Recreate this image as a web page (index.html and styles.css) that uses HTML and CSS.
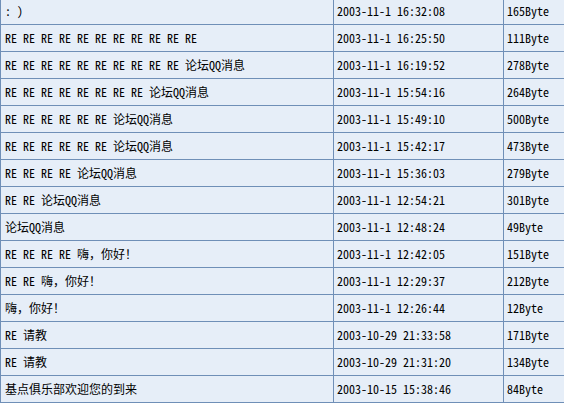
FILE: index.html
```html
<!DOCTYPE html>
<html lang="zh-CN">
<head>
<meta charset="utf-8">
<link rel="stylesheet" href="styles.css">
</head>
<body>
<div class="wrap">
<table class="list">
<colgroup><col class="c-title"><col class="c-date"><col class="c-size"></colgroup>
<tbody>
<tr><td>: )</td><td>2003-11-1 16:32:08</td><td>165Byte</td></tr>
<tr><td>RE RE RE RE RE RE RE RE RE RE RE</td><td>2003-11-1 16:25:50</td><td>111Byte</td></tr>
<tr><td>RE RE RE RE RE RE RE RE RE RE 论坛QQ消息</td><td>2003-11-1 16:19:52</td><td>278Byte</td></tr>
<tr><td>RE RE RE RE RE RE RE RE 论坛QQ消息</td><td>2003-11-1 15:54:16</td><td>264Byte</td></tr>
<tr><td>RE RE RE RE RE RE 论坛QQ消息</td><td>2003-11-1 15:49:10</td><td>500Byte</td></tr>
<tr><td>RE RE RE RE RE RE 论坛QQ消息</td><td>2003-11-1 15:42:17</td><td>473Byte</td></tr>
<tr><td>RE RE RE RE 论坛QQ消息</td><td>2003-11-1 15:36:03</td><td>279Byte</td></tr>
<tr><td>RE RE 论坛QQ消息</td><td>2003-11-1 12:54:21</td><td>301Byte</td></tr>
<tr><td>论坛QQ消息</td><td>2003-11-1 12:48:24</td><td>49Byte</td></tr>
<tr><td>RE RE RE RE 嗨，你好！</td><td>2003-11-1 12:42:05</td><td>151Byte</td></tr>
<tr><td>RE RE 嗨，你好！</td><td>2003-11-1 12:29:37</td><td>212Byte</td></tr>
<tr><td>嗨，你好！</td><td>2003-11-1 12:26:44</td><td>12Byte</td></tr>
<tr><td>RE 请教</td><td>2003-10-29 21:33:58</td><td>171Byte</td></tr>
<tr><td>RE 请教</td><td>2003-10-29 21:31:20</td><td>134Byte</td></tr>
<tr><td>基点俱乐部欢迎您的到来</td><td>2003-10-15 15:38:46</td><td>84Byte</td></tr>
</tbody>
</table>
</div>
</body>
</html>
```
FILE: styles.css
```css
html, body {
  margin: 0;
  padding: 0;
  background: #ffffff;
}
.wrap {
  margin-top: -3px;
}
.list {
  border-collapse: collapse;
  width: 564px;
  table-layout: fixed;
  font-family: "Noto Sans Mono CJK SC", "Liberation Mono", "Noto Sans CJK SC", monospace;
  font-size: 12px;
  color: #000;
}
.c-title { width: 333px; }
.c-date { width: 170px; }
.c-size { width: 61px; }
.list td {
  height: 26px;
  padding: 0 0 0 3px;
  background: #e6eef8;
  border: 1px solid #6f8fb7;
  white-space: nowrap;
  overflow: hidden;
  vertical-align: middle;
  line-height: 14px;
}
.list td:first-child {
  padding-left: 4px;
}
```
